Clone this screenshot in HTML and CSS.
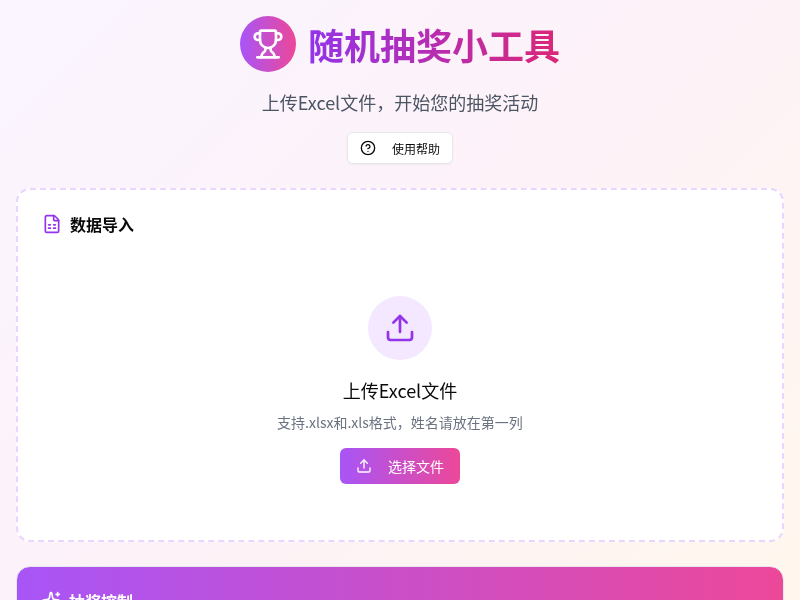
FILE: index.html
```html
<!DOCTYPE html>
<html lang="zh-CN">
<head>
  <meta charset="UTF-8" />
  <meta name="viewport" content="width=device-width, initial-scale=1.0" />
  <title>随机抽奖小工具</title>
  <link rel="stylesheet" href="styles.css">
</head>
<body>
  <div class="container">
    <header class="header">
      <div class="brand">
        <div class="brand-icon">
          <svg width="32" height="32" viewBox="0 0 24 24" fill="none" stroke="currentColor" stroke-width="2" stroke-linecap="round" stroke-linejoin="round">
            <path d="M10 14.66v1.626a2 2 0 0 1-.976 1.696A5 5 0 0 0 7 21.978" />
            <path d="M14 14.66v1.626a2 2 0 0 0 .976 1.696A5 5 0 0 1 17 21.978" />
            <path d="M18 9h1.5a1 1 0 0 0 0-5H18" />
            <path d="M4 22h16" />
            <path d="M6 9a6 6 0 0 0 12 0V3a1 1 0 0 0-1-1H7a1 1 0 0 0-1 1z" />
            <path d="M6 9H4.5a1 1 0 0 1 0-5H6" />
          </svg>
        </div>
        <h1 class="title">随机抽奖小工具</h1>
      </div>
      <p class="subtitle">上传Excel文件，开始您的抽奖活动</p>
      <button class="help-btn">
        <svg width="16" height="16" viewBox="0 0 24 24" fill="none" stroke="currentColor" stroke-width="2" stroke-linecap="round" stroke-linejoin="round">
          <circle cx="12" cy="12" r="10" />
          <path d="M9.09 9a3 3 0 0 1 5.83 1c0 2-3 3-3 3" />
          <path d="M12 17h.01" />
        </svg>
        使用帮助
      </button>
    </header>

    <section class="card import-card">
      <div class="card-head">
        <svg class="head-icon" width="20" height="20" viewBox="0 0 24 24" fill="none" stroke="currentColor" stroke-width="2" stroke-linecap="round" stroke-linejoin="round">
          <path d="M6 22a2 2 0 0 1-2-2V4a2 2 0 0 1 2-2h8a2.4 2.4 0 0 1 1.704.706l3.588 3.588A2.4 2.4 0 0 1 20 8v12a2 2 0 0 1-2 2z" />
          <path d="M14 2v5a1 1 0 0 0 1 1h5" />
          <path d="M8 13h2" />
          <path d="M14 13h2" />
          <path d="M8 17h2" />
          <path d="M14 17h2" />
        </svg>
        <h2 class="card-title">数据导入</h2>
      </div>
      <div class="upload">
        <div class="upload-icon">
          <svg width="32" height="32" viewBox="0 0 24 24" fill="none" stroke="currentColor" stroke-width="2" stroke-linecap="round" stroke-linejoin="round">
            <path d="M12 3v12" />
            <path d="m17 8-5-5-5 5" />
            <path d="M21 15v4a2 2 0 0 1-2 2H5a2 2 0 0 1-2-2v-4" />
          </svg>
        </div>
        <h3 class="upload-title">上传Excel文件</h3>
        <p class="upload-note">支持.xlsx和.xls格式，姓名请放在第一列</p>
        <button class="pick-btn">
          <svg width="16" height="16" viewBox="0 0 24 24" fill="none" stroke="currentColor" stroke-width="2" stroke-linecap="round" stroke-linejoin="round">
            <path d="M12 3v12" />
            <path d="m17 8-5-5-5 5" />
            <path d="M21 15v4a2 2 0 0 1-2 2H5a2 2 0 0 1-2-2v-4" />
          </svg>
          选择文件
        </button>
      </div>
    </section>

    <section class="card control-card">
      <div class="card-head">
        <svg width="20" height="20" viewBox="0 0 24 24" fill="none" stroke="currentColor" stroke-width="2" stroke-linecap="round" stroke-linejoin="round">
          <path d="M11.017 2.814a1 1 0 0 1 1.966 0l1.051 5.558a2 2 0 0 0 1.594 1.594l5.558 1.051a1 1 0 0 1 0 1.966l-5.558 1.051a2 2 0 0 0-1.594 1.594l-1.051 5.558a1 1 0 0 1-1.966 0l-1.051-5.558a2 2 0 0 0-1.594-1.594l-5.558-1.051a1 1 0 0 1 0-1.966l5.558-1.051a2 2 0 0 0 1.594-1.594z" />
          <path d="M20 2v4" />
          <path d="M22 4h-4" />
          <circle cx="4" cy="20" r="2" />
        </svg>
        <h2 class="card-title">抽奖控制</h2>
      </div>
    </section>
  </div>
</body>
</html>
```

FILE: styles.css
```css
* {
  box-sizing: border-box;
}

body {
  margin: 0;
  min-height: 100vh;
  background: linear-gradient(135deg, #faf5ff, #fdf2f8, #fff7ed);
  color: #0a0a0a;
  font-family: "Noto Sans CJK SC", "Noto Sans", sans-serif;
}

.container {
  padding: 16px;
  height: 600px;
  overflow: hidden;
  will-change: transform;
}

.header {
  display: flex;
  flex-direction: column;
  align-items: center;
  margin-bottom: 24px;
}

.brand {
  display: flex;
  align-items: center;
  gap: 12px;
  margin-bottom: 16px;
}

.brand-icon {
  display: flex;
  align-items: center;
  justify-content: center;
  width: 56px;
  height: 56px;
  border-radius: 50%;
  background: linear-gradient(to right, #a855f7, #ec4899);
  color: #fff;
}

.title {
  margin: 0;
  font-size: 36px;
  line-height: 40px;
  font-weight: 700;
  background: linear-gradient(to right, #9333ea, #db2777);
  -webkit-background-clip: text;
  background-clip: text;
  color: transparent;
}

.subtitle {
  margin: 0 0 16px;
  font-size: 18px;
  line-height: 28px;
  color: #4b5563;
}

.help-btn {
  display: flex;
  align-items: center;
  gap: 16px;
  height: 32px;
  padding: 0 12px;
  border: 1px solid #e5e7eb;
  border-radius: 6px;
  background: #fff;
  color: #0a0a0a;
  font-family: inherit;
  font-size: 12px;
  box-shadow: 0 1px 2px rgba(0, 0, 0, 0.05);
}

.card {
  border-radius: 14px;
}

.import-card {
  height: 354px;
  margin-bottom: 24px;
  padding: 22px 24px;
  border: 2px dashed #e9d5ff;
  background: #fff;
}

.card-head {
  display: flex;
  align-items: center;
  gap: 8px;
}

.head-icon {
  color: #9333ea;
}

.card-title {
  margin: 0;
  font-size: 16px;
  line-height: 24px;
  font-weight: 600;
}

.upload {
  display: flex;
  flex-direction: column;
  align-items: center;
  margin-top: 60px;
}

.upload-icon {
  display: flex;
  align-items: center;
  justify-content: center;
  width: 64px;
  height: 64px;
  margin-bottom: 16px;
  border-radius: 50%;
  background: #f3e8ff;
  color: #9333ea;
}

.upload-title {
  margin: 0 0 8px;
  font-size: 18px;
  line-height: 28px;
  font-weight: 400;
}

.upload-note {
  margin: 0 0 16px;
  font-size: 14px;
  line-height: 20px;
  color: #6b7280;
}

.pick-btn {
  display: flex;
  align-items: center;
  gap: 16px;
  height: 36px;
  padding: 0 16px;
  border: none;
  border-radius: 6px;
  background: linear-gradient(to right, #a855f7, #ec4899);
  color: #fff;
  font-family: inherit;
  font-size: 14px;
}

.control-card {
  height: 200px;
  padding: 22px 24px;
  border: 1px solid #e5e7eb;
  background: linear-gradient(to right, #a855f7, #ec4899);
  color: #fff;
}
```
